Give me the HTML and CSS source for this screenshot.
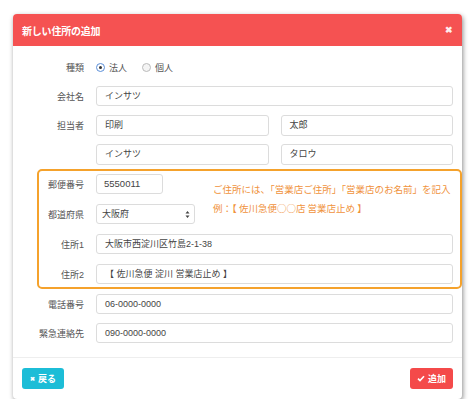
FILE: index.html
```html
<!DOCTYPE html>
<html lang="ja">
<head>
<meta charset="utf-8">
<link rel="stylesheet" href="styles.css">
</head>
<body>
<div class="modal">
  <div class="modal-header">
    <span class="title">新しい住所の追加</span>
    <span class="close">&#x2716;</span>
  </div>
  <div class="modal-body">
    <div class="row">
      <label class="lbl">種類</label>
      <div class="radios">
        <span class="radio on"></span><span class="rtext">法人</span>
        <span class="radio"></span><span class="rtext">個人</span>
      </div>
    </div>
    <div class="row">
      <label class="lbl">会社名</label>
      <div class="input full">インサツ</div>
    </div>
    <div class="row">
      <label class="lbl">担当者</label>
      <div class="pair">
        <div class="input">印刷</div>
        <div class="input">太郎</div>
      </div>
    </div>
    <div class="row">
      <label class="lbl"></label>
      <div class="pair">
        <div class="input">インサツ</div>
        <div class="input">タロウ</div>
      </div>
    </div>
    <div class="box">
      <div class="box-top">
        <div class="box-left">
          <div class="row">
            <label class="lbl">郵便番号</label>
            <div class="input zip">5550011</div>
          </div>
          <div class="row">
            <label class="lbl">都道府県</label>
            <div class="input select">大阪府<span class="caret"><svg width="5" height="9" viewBox="0 0 5 9"><path d="M0.5 3.5 L2.5 1 L4.5 3.5 Z M0.5 5.5 L2.5 8 L4.5 5.5 Z" fill="#444"/></svg></span></div>
          </div>
        </div>
        <div class="hint">ご住所には、「営業店ご住所」「営業店のお名前」を記入<br>例：【 佐川急便○○店 営業店止め 】</div>
      </div>
      <div class="row">
        <label class="lbl">住所1</label>
        <div class="input full">大阪市西淀川区竹島2-1-38</div>
      </div>
      <div class="row">
        <label class="lbl">住所2</label>
        <div class="input full">【 佐川急便 淀川 営業店止め 】</div>
      </div>
    </div>
    <div class="row">
      <label class="lbl">電話番号</label>
      <div class="input full">06-0000-0000</div>
    </div>
    <div class="row">
      <label class="lbl">緊急連絡先</label>
      <div class="input full">090-0000-0000</div>
    </div>
  </div>
  <div class="modal-footer">
    <span class="btn back"><span class="ico">&#x2716;</span>戻る</span>
    <span class="btn add"><span class="ico"><svg width="8" height="7" viewBox="0 0 8 7"><path d="M1 3.6 L3 5.6 L7 1.2" stroke="#fff" stroke-width="1.6" fill="none"/></svg></span>追加</span>
  </div>
</div>
</body>
</html>
```

FILE: styles.css
```css
* { box-sizing: border-box; }
html, body { margin: 0; padding: 0; background: #fff; }
body {
  font-family: "Liberation Sans", "Noto Sans CJK JP", sans-serif;
  color: #555;
  padding: 14px 12px 0 13px;
}
.modal {
  width: 449px;
  height: 385px;
  background: #fff;
  border-radius: 4px;
  box-shadow: 1px 2px 5px rgba(0,0,0,0.45);
  display: flex;
  flex-direction: column;
}
.modal-header {
  height: 32px;
  background: #f55252;
  border-radius: 4px 4px 0 0;
  display: flex;
  align-items: center;
  justify-content: space-between;
  padding: 0 9px 0 9px;
  color: #fff;
}
.title { font-size: 10px; font-weight: bold; letter-spacing: -0.2px; }
.close { font-size: 9px; font-weight: bold; opacity: 0.9; }
.modal-body {
  padding: 11px 9px 0 0;
  display: flex;
  flex-direction: column;
  gap: 9px;
  height: 312px;
  border-bottom: 1px solid #eee;
}
.row {
  display: flex;
  align-items: center;
  height: 20px;
}
.lbl {
  width: 71px;
  margin-right: 12px;
  text-align: right;
  font-size: 9px;
  color: #555;
  flex: none;
}
.radios { display: flex; align-items: center; font-size: 9px; color: #555; }
.radio {
  width: 9px; height: 9px; border-radius: 50%;
  border: 1px solid #bbb;
  background: #f4f4f4;
  margin-right: 4px;
  position: relative;
}
.radio.on { border-color: #5b8fd9; background: #fff; }
.radio.on::after {
  content: ""; position: absolute; left: 2px; top: 2px;
  width: 3px; height: 3px; border-radius: 50%; background: #333;
}
.rtext { margin-right: 15px; }
.input {
  height: 20px;
  border: 1px solid #dcdcdc;
  border-radius: 3px;
  padding: 0 8px;
  font-size: 9px;
  line-height: 18px;
  color: #444;
  background: #fff;
}
.full { flex: 1; }
.pair { flex: 1; display: flex; gap: 12px; height: 21px; }
.pair .input { flex: 1; height: 21px; line-height: 19px; }
.zip { width: 67px; padding-left: 7px; font-size: 9.5px; }
.select {
  width: 99px;
  padding-left: 5px;
  display: flex;
  justify-content: space-between;
  align-items: center;
  padding-right: 4px;
}
.caret { display: flex; }
.box {
  margin: -4px -9px -4px 24px;
  border: 2px solid #f5a22c;
  border-radius: 5px;
  padding: 3px 7px 3px 0;
  display: flex;
  flex-direction: column;
  gap: 10px;
}
.box .lbl { width: 45px; }
.box-top { display: flex; }
.box-left { display: flex; flex-direction: column; gap: 10px; width: 156px; }
.hint {
  margin-left: 18px;
  padding-top: 6px;
  font-family: "Noto Sans CJK JP", sans-serif;
  font-size: 9.5px;
  line-height: 19px;
  color: #f0923c;
  white-space: nowrap;
}
.modal-footer {
  display: flex;
  justify-content: space-between;
  padding: 10px 9px 0 9px;
}
.btn {
  height: 21px;
  border-radius: 3px;
  color: #fff;
  font-size: 9px;
  font-weight: bold;
  display: flex;
  align-items: center;
  justify-content: center;
  white-space: nowrap;
  padding: 0;
}
.btn .ico { margin-right: 3px; font-size: 6px; display: flex; }
.back { background: #1cbdd7; width: 42px; }
.add { background: #f44a4a; width: 43px; }
```
